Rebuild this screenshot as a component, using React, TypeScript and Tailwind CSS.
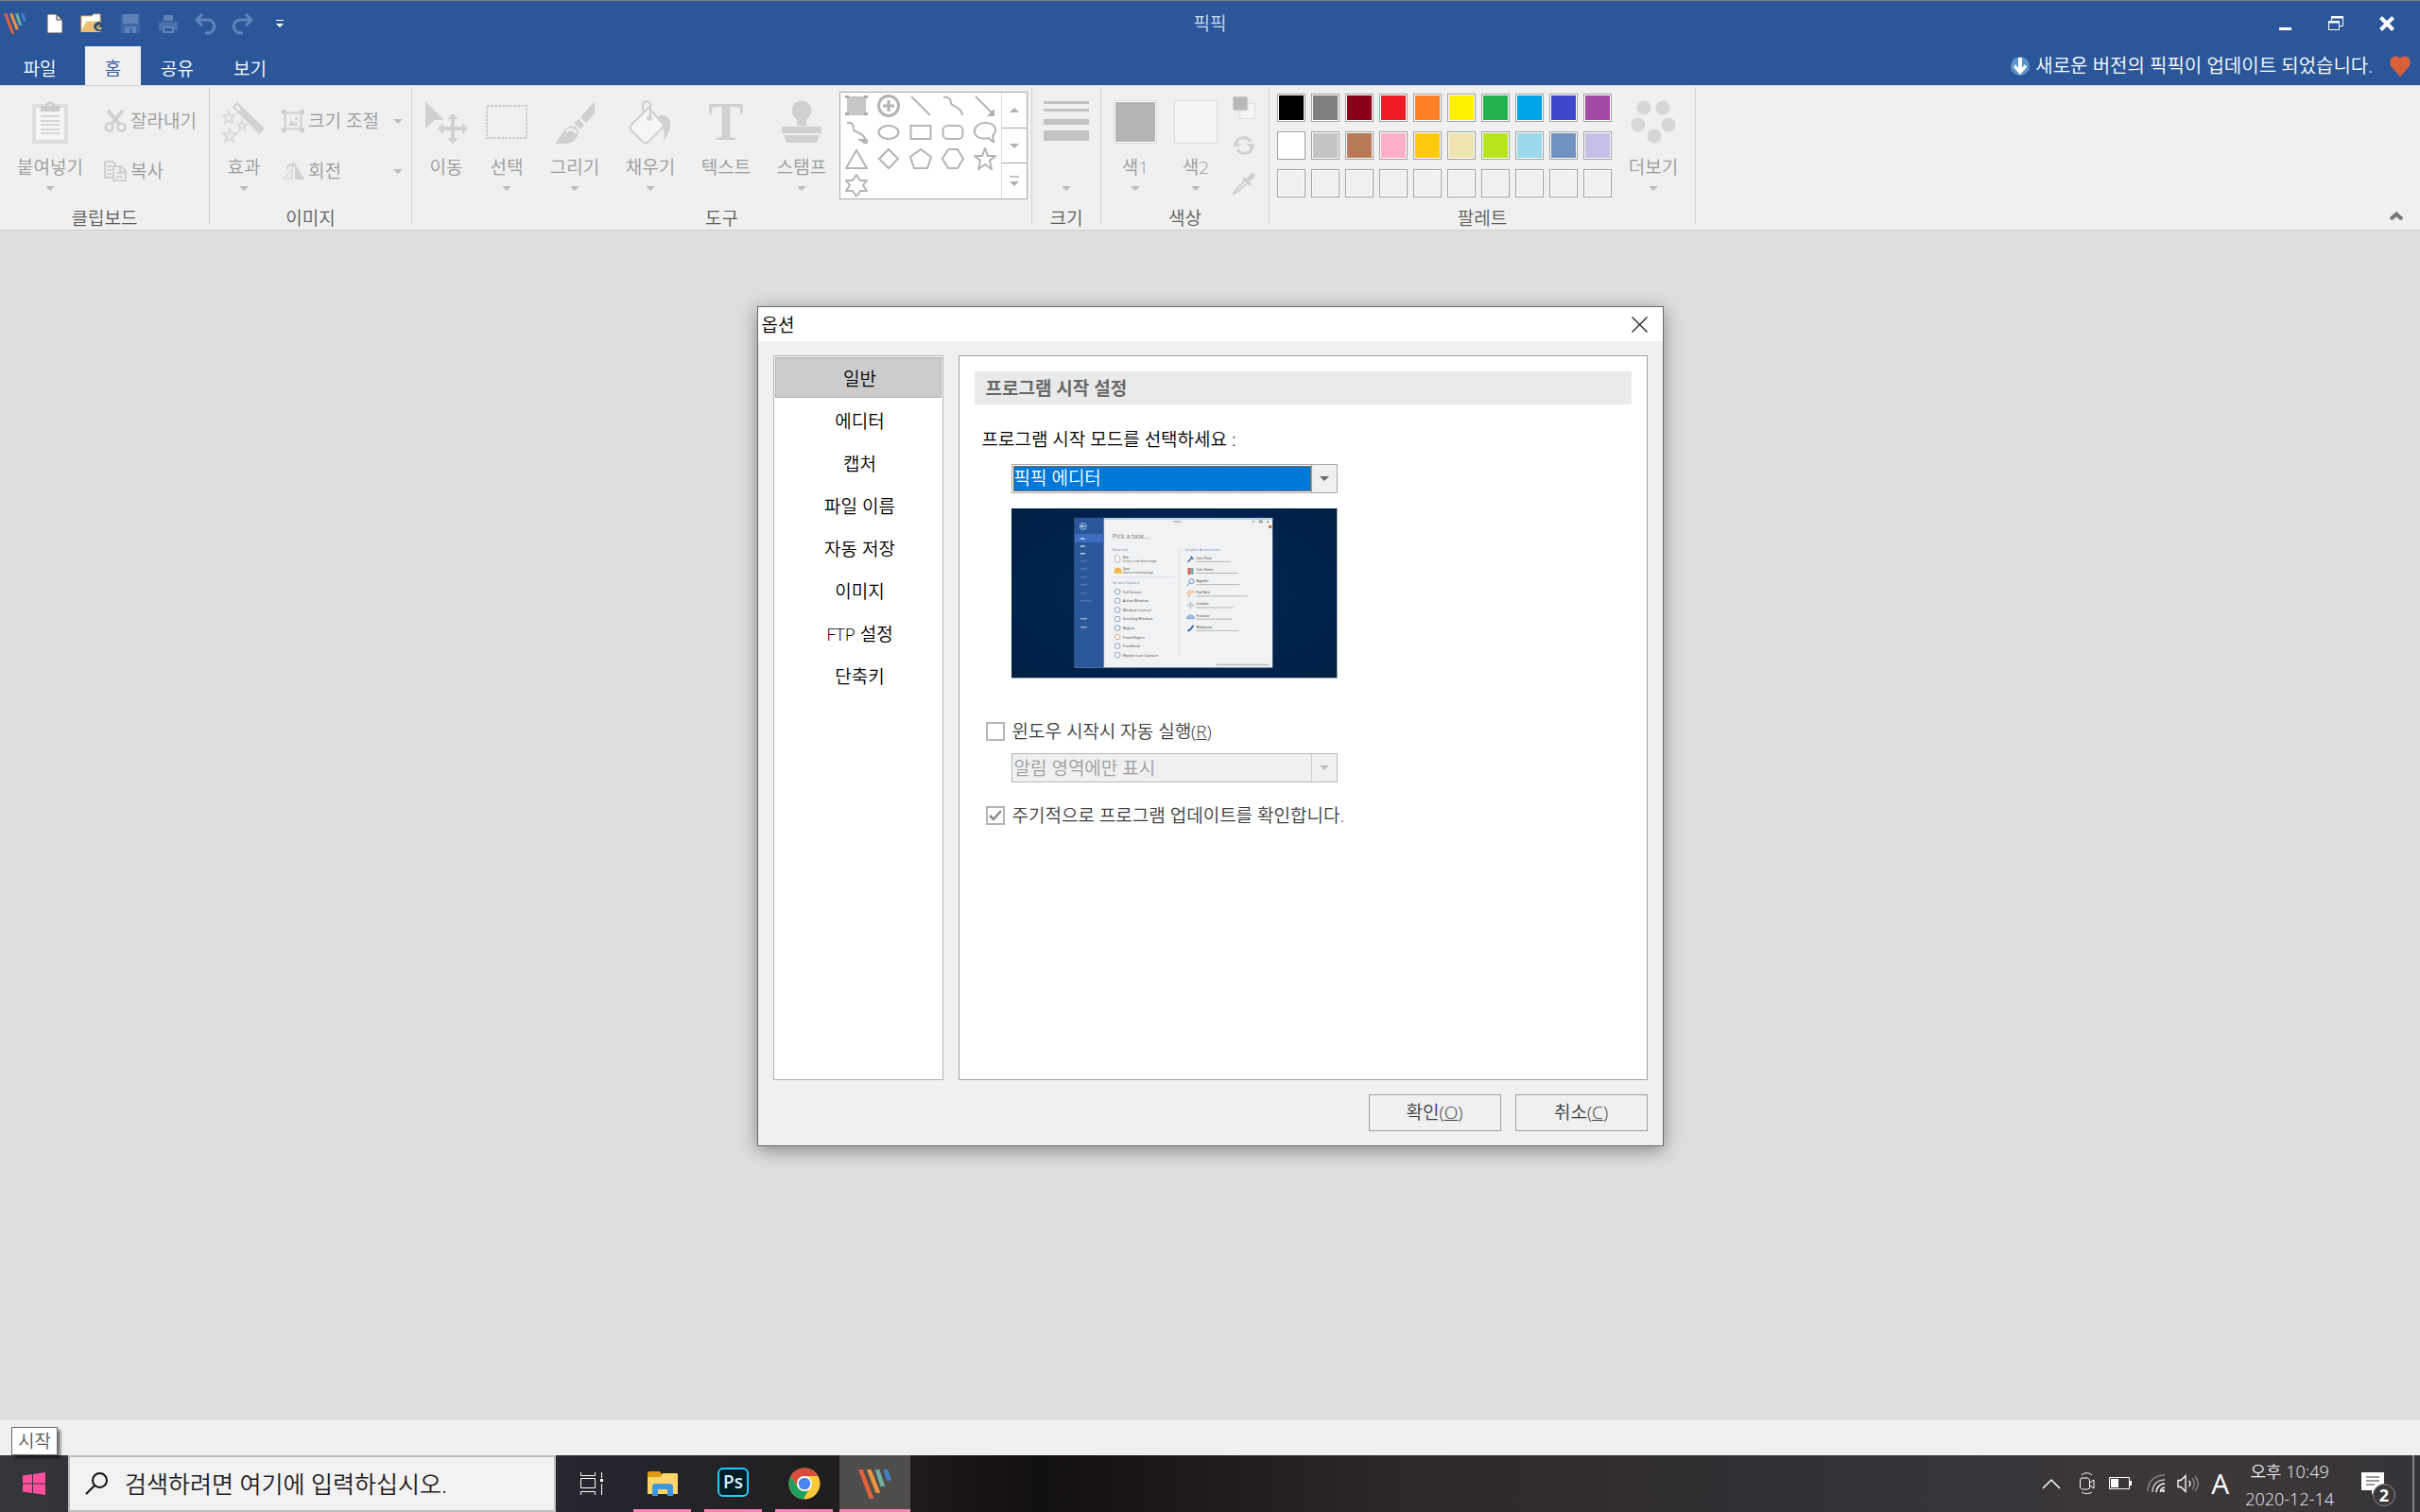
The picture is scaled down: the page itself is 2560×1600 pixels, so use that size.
import { useState } from 'react';
import type { ReactNode } from 'react';

const MENU = ['일반', '에디터', '캡처', '파일 이름', '자동 저장', '이미지', 'FTP 설정', '단축키'];

const PALETTE = [
  '#000000', '#7f7f7f', '#880015', '#ed1c24', '#ff7f27', '#fff200', '#22b14c', '#00a2e8', '#3f48cc', '#a349a4',
  '#ffffff', '#c3c3c3', '#b97a57', '#ffaec9', '#ffc90e', '#efe4b0', '#b5e61d', '#99d9ea', '#7092be', '#c8bfe7',
  '#f0f0f0', '#f0f0f0', '#f0f0f0', '#f0f0f0', '#f0f0f0', '#f0f0f0', '#f0f0f0', '#f0f0f0', '#f0f0f0', '#f0f0f0',
];

function Arrow({ className = 'text-[#bdbdbd]' }: { className?: string }) {
  return (
    <svg width="10" height="5" viewBox="0 0 10 5" className={className}>
      <path d="M0 0h10L5 5z" fill="currentColor" />
    </svg>
  );
}

function Logo({ size, className }: { size: number; className?: string }) {
  return (
    <svg width={size} height={size} viewBox="0 0 36 34" className={className}>
      <path d="M0 1h5l12 32h-5z" fill="#e2603c" />
      <path d="M9 1h5l10 25.500h-5z" fill="#ee9440" />
      <path d="M18 1h5l6 18.500h-5z" fill="#6fac9a" />
      <path d="M27 1h5l4 12h-5z" fill="#3f7fd0" />
    </svg>
  );
}

interface BigButtonProps {
  label: string;
  icon: ReactNode;
  width: string;
  arrow?: boolean;
}

function BigButton({ label, icon, width, arrow = true }: BigButtonProps) {
  return (
    <button className={`flex flex-col items-center pt-[14px] text-[#9a9a9a] ${width}`}>
      <span className="flex h-12 items-center justify-center text-[#d0d0d0]">{icon}</span>
      <span className="mt-3 h-6 leading-6 whitespace-nowrap">{label}</span>
      {arrow && <Arrow className="mt-2 text-[#bdbdbd]" />}
    </button>
  );
}

function SmallButton({ label, icon, arrow }: { label: string; icon: ReactNode; arrow?: boolean }) {
  return (
    <button className="flex h-6 items-center gap-1 whitespace-nowrap text-[#9a9a9a]">
      <span className="text-[#d0d0d0]">{icon}</span>
      {label}
      {arrow && <Arrow className="ml-auto text-[#bdbdbd]" />}
    </button>
  );
}

function Group({ title, width, children }: { title: string; width: string; children: ReactNode }) {
  return (
    <>
      <section className={`flex shrink-0 flex-col ${width}`}>
        <div className="flex flex-1">{children}</div>
        <h2 className="text-center leading-6 text-[#5c5c5c]">{title}</h2>
      </section>
      <div className="mt-px mb-1.5 w-px bg-[#d2d2d2]" />
    </>
  );
}

function TitleBar() {
  return (
    <div className="grid h-12 grid-cols-[1fr_auto_1fr] items-center">
      <div className="flex items-center">
        <Logo size={24} className="mr-[10px] ml-1" />
        <button aria-label="새로 만들기" className="flex w-10 justify-center">
          <svg width="18" height="22" viewBox="0 0 18 22">
            <path d="M1 1h10l6 6v14H1z" fill="#fff" stroke="#555" strokeWidth="1" />
            <path d="M11 1v6h6z" fill="#ddd" stroke="#444" />
          </svg>
        </button>
        <button aria-label="열기" className="flex w-10 justify-center">
          <svg width="26" height="22" viewBox="0 0 26 22">
            <path d="M1 3h11l2-2h7v8H7L1 20z" fill="#fff" stroke="#e9b867" />
            <path d="M1 20L6 9h19l-4 11z" fill="#edbf72" />
            <path d="M14 13c2-4 6-5 9-3v-2l3 0v7h-7l2-2c-2-1-3 0-4 2 1 2 4 3 7 2-3 4-10 2-10-4z" fill="#27527f" />
          </svg>
        </button>
        <button aria-label="저장" className="flex w-10 justify-center">
          <svg width="20" height="22" viewBox="0 0 20 22" fill="#5f82b6">
            <path d="M0 1h20v20H0z" fill="#3d66a5" />
            <path d="M2 1h16v10H2zM4 14h12v7H4z" />
            <path d="M9 16h3v5H9z" fill="#3d66a5" />
          </svg>
        </button>
        <button aria-label="인쇄" className="flex w-10 justify-center">
          <svg width="20" height="20" viewBox="0 0 20 20">
            <path d="M5 1h10v6H5z" fill="#5f82b6" />
            <path d="M0 8h20v9h-4v-4H4v4H0z" fill="#4770ac" />
            <path d="M5 14h10v5H5z" fill="none" stroke="#5f82b6" strokeWidth="2" />
          </svg>
        </button>
        <button aria-label="실행 취소" className="flex w-[39px] justify-center">
          <svg width="23" height="23" viewBox="0 0 23 23" fill="none" stroke="#6184b9" strokeWidth="3">
            <path d="M8 1L2 7l6 6M2 7h12c9 1 9 13 0 14h-3" />
          </svg>
        </button>
        <button aria-label="다시 실행" className="flex w-[39px] justify-center">
          <svg width="23" height="23" viewBox="0 0 23 23" fill="none" stroke="#6184b9" strokeWidth="3">
            <path d="M15 1l6 6-6 6M21 7H9c-9 1-9 13 0 14h3" />
          </svg>
        </button>
        <button aria-label="도구 모음 사용자 지정" className="flex w-[39px] justify-center">
          <svg width="8" height="8" viewBox="0 0 8 8" fill="#fff">
            <path d="M0 0h8v1H0zM0 4h8L4 8z" />
          </svg>
        </button>
      </div>
      <h1 className="pt-px text-[#cfdcee]">픽픽</h1>
      <div className="flex justify-end pr-2">
        <button aria-label="최소화" className="flex w-[54px] items-end justify-center pb-px">
          <span className="h-[3px] w-[13px] bg-white" />
        </button>
        <button aria-label="이전 크기로 복원" className="flex w-[54px] justify-center">
          <svg width="16" height="16" viewBox="0 0 16 16" fill="none" stroke="#fff">
            <path d="M.5 5.500h11v9H.500zM3.500 5V.500h12v10H12" />
            <path d="M0 6.500h12M3 1.500h13" strokeWidth="2" />
          </svg>
        </button>
        <button aria-label="닫기" className="flex w-[54px] justify-center">
          <svg width="16" height="16" viewBox="0 0 16 16" stroke="#fff" strokeWidth="4">
            <path d="M1.500 1.500l13 13M14.500 1.500l-13 13" />
          </svg>
        </button>
      </div>
    </div>
  );
}

function TabBar() {
  return (
    <div className="flex h-[41px] text-white">
      <button className="w-[90px] pt-2 pr-1.5">파일</button>
      <button className="w-[59px] bg-[#f0f0f0] pt-2 text-[#2b579a]">홈</button>
      <button className="w-[77px] pt-2">공유</button>
      <button className="w-[77px] pt-2">보기</button>
      <div className="ml-auto flex items-center gap-1.5 pr-2.5">
        <svg width="20" height="20" viewBox="0 0 20 20">
          <circle cx="10" cy="10" r="10" fill="#5c93c9" />
          <path d="M8 1h4v11l3-4 2 3-7 8-7-8 2-3 3 4z" fill="#fff" />
        </svg>
        <a href="#update" className="text-[20px]">새로운 버전의 픽픽이 업데이트 되었습니다.</a>
        <svg width="22" height="22" viewBox="0 0 22 22" className="ml-3">
          <path d="M11 22L2 12C-1 8 0 1 6 .500c2 0 4 1 5 2.500 1-1.500 3-2.500 5-2.500 6 .500 7 7.500 4 11.500z" fill="#d9603b" />
        </svg>
      </div>
    </div>
  );
}

const SHAPES: { name: string; d: ReactNode }[] = [
  { name: '채운 사각형', d: <><path d="M2 2h20v20H2z" fill="#c6c6c6" stroke="none" /><path d="M0 1h4v3H0zM20 1h4v3h-4zM0 19h4v3H0zM20 19h4v3h-4z" fill="#aaa" stroke="none" /></> },
  { name: '번호', d: <><circle cx="12" cy="12" r="10.500" strokeWidth="3" /><path d="M12 6v12M6 12h12" strokeWidth="3" /></> },
  { name: '직선', d: <path d="M2 2l20 20" /> },
  { name: '곡선', d: <path d="M2 3c6-1 8 2 8 6s11 3 12 13" /> },
  { name: '화살표', d: <><path d="M2 2l18 18" /><path d="M22 15v8h-8z" fill="#b0b0b0" stroke="none" /></> },
  { name: '곡선 화살표', d: <><path d="M2 2c6-1 7 3 7 7s10 1 13 12" /><path d="M16 20h8l-2 4z" fill="#b0b0b0" /></> },
  { name: '타원', d: <ellipse cx="12" cy="12" rx="10.500" ry="7" /> },
  { name: '사각형', d: <rect x="1.500" y="5" width="21" height="14" /> },
  { name: '둥근 사각형', d: <rect x="1.500" y="5" width="21" height="14" rx="5" /> },
  { name: '말풍선', d: <path d="M16 18c-8 2-16-1-15-8C2 0 22-1 23 9c0 4-2 6-3 7l1 6c-2-1-4-2-5-4z" /> },
  { name: '삼각형', d: <path d="M12 3l11 19H1z" /> },
  { name: '마름모', d: <path d="M12 2l10 10-10 10L2 12z" /> },
  { name: '오각형', d: <path d="M12 2l11 8-4 12H5L1 10z" /> },
  { name: '육각형', d: <path d="M7 2h10l6 10-6 10H7L1 12z" /> },
  { name: '별', d: <path d="M12 1l3 8h8l-6 5 2 9-7-5-7 5 2-9-6-5h8z" /> },
  { name: '육각별', d: <path d="M12 1l4 6h7l-4 5 4 6h-7l-4 6-4-6H1l4-6-4-5h7z" /> },
];

function ShapeGallery() {
  return (
    <div className="mt-1.5 flex h-[114px] w-[199px] border border-[#a8a8a8] bg-white">
      <div className="grid flex-1 grid-cols-5 grid-rows-4 place-items-center">
        {SHAPES.map(shape => (
          <button key={shape.name} aria-label={shape.name}>
            <svg width="24" height="24" viewBox="0 0 24 24" fill="none" stroke="#b4b4b4" strokeWidth="2">
              {shape.d}
            </svg>
          </button>
        ))}
      </div>
      <div className="flex w-[27px] flex-col divide-y divide-[#a8a8a8] border-l border-[#dcdcdc]">
        <button aria-label="위로" className="flex flex-1 items-center justify-center">
          <Arrow className="rotate-180 text-[#b0b0b0]" />
        </button>
        <button aria-label="아래로" className="flex flex-1 items-center justify-center">
          <Arrow className="text-[#b0b0b0]" />
        </button>
        <button aria-label="모두 보기" className="flex flex-1 flex-col items-center justify-center gap-1">
          <span className="h-0.5 w-2.5 bg-[#c4c4c4]" />
          <Arrow className="text-[#b0b0b0]" />
        </button>
      </div>
    </div>
  );
}

function Ribbon() {
  return (
    <div className="relative flex h-[154px] border-t border-b border-t-[#d6d6d6] border-b-[#cfcfcf] bg-[#f0f0f0]">
      <Group title="클립보드" width="w-[221px]">
        <BigButton
          label="붙여넣기"
          width="w-[106px]"
          icon={
            <svg width="38" height="46" viewBox="0 0 38 46">
              <path d="M2 6h34v38H2z" fill="none" stroke="#dedede" strokeWidth="4" />
              <path d="M5 9h28v32H5z" fill="#f6f6f6" />
              <path d="M9 12V6h5c0-6 10-6 10 0h5v6z" fill="#cacaca" />
              <circle cx="19" cy="5" r="1.500" fill="#f0f0f0" />
              <path d="M9 17h20M9 22h20M9 26h20M9 31h20M9 35h20" stroke="#d6d6d6" strokeWidth="2" />
            </svg>
          }
        />
        <div className="ml-1 flex flex-col gap-[29px] pt-[25px]">
          <SmallButton
            label="잘라내기"
            icon={
              <svg width="24" height="24" viewBox="0 0 24 24" fill="none" stroke="currentColor">
                <path d="M4 1l12 14M20 1L8 15" strokeWidth="4" />
                <circle cx="5.500" cy="18.500" r="4" strokeWidth="2.500" />
                <circle cx="18.500" cy="18.500" r="4" strokeWidth="2.500" />
              </svg>
            }
          />
          <SmallButton
            label="복사"
            icon={
              <svg width="24" height="24" viewBox="0 0 24 24" fill="none" stroke="currentColor" strokeWidth="2">
                <path d="M1 2h8l4 4M1 2v17h8" />
                <path d="M10 7h8l5 5v10H10zM17 7v6h6M3 7h5M3 11h5M3 15h5M13 14h7M13 18h7" />
              </svg>
            }
          />
        </div>
      </Group>

      <Group title="이미지" width="w-[213px]">
        <BigButton
          label="효과"
          width="w-[72px]"
          icon={
            <svg width="48" height="46" viewBox="0 0 48 46">
              <path d="M17 2l29 28-6 6L12 7z" fill="#d2d2d2" />
              <path d="M17 4l5 5-4 4-5-6z" fill="#f3f3f3" stroke="#d2d2d2" strokeWidth="2" />
              <g fill="#ececec" stroke="#dadada" strokeWidth="2">
                <path d="M8 12l2 4h4l-3 4 1 4-4-2-4 2 1-4-3-4h4z" />
                <path d="M22 22l1 3 4 1-3 2 1 4-3-2-3 2 1-4-3-2 4-1z" />
                <path d="M9 30l2 5h5l-4 4 1 5-4-3-5 3 2-5-4-4h5z" />
              </g>
            </svg>
          }
        />
        <div className="ml-1 flex w-[128px] flex-col gap-[29px] pt-[25px]">
          <SmallButton
            label="크기 조절"
            arrow
            icon={
              <svg width="24" height="24" viewBox="0 0 24 24" fill="currentColor">
                <path d="M0 0h5v5H0zM19 0h5v5h-5zM0 19h5v5H0zM19 19h5v5h-5zM7 17l3-6 3 4 2-2 2 4zM14 8h3v3h-3z" />
                <path d="M3.500 3.500h17v17h-17z" fill="none" stroke="currentColor" strokeWidth="2" />
              </svg>
            }
          />
          <SmallButton
            label="회전"
            arrow
            icon={
              <svg width="24" height="24" viewBox="0 0 24 24" fill="currentColor">
                <path d="M14 4l10 17H14z" />
                <path d="M11 10v10H2z" fill="none" stroke="#dcdcdc" strokeWidth="2" />
                <path d="M5 10c0-5 3-6 6-6V1l4 4-4 4V6C9 6 7 7 7 10z" />
              </svg>
            }
          />
        </div>
      </Group>

      <Group title="도구" width="w-[655px]">
        <BigButton
          label="이동"
          width="ml-1 w-16"
          arrow={false}
          icon={
            <svg width="46" height="46" viewBox="0 0 46 46" fill="currentColor">
              <path d="M1 1l20 20H11L1 30z" />
              <path d="M30 14l6 6h-4v8h8v-4l6 6-6 6v-4h-8v8h4l-6 6-6-6h4v-8h-8v4l-6-6 6-6v4h8v-8h-4z" />
            </svg>
          }
        />
        <BigButton
          label="선택"
          width="w-16"
          icon={
            <svg width="44" height="36" viewBox="0 0 44 36">
              <path d="M1 1h42v34H1z" fill="none" stroke="currentColor" strokeWidth="2" strokeDasharray="3 1" />
            </svg>
          }
        />
        <BigButton
          label="그리기"
          width="w-20"
          icon={
            <svg width="44" height="46" viewBox="0 0 44 46" fill="currentColor">
              <path d="M43 1v13L34 24l-6-6zM26 20l6 6-4 5-7-7z" />
              <path d="M1 46l10-14c4-6 10-6 13-2s2 9-3 13c-5 4-12 3-20 3z" />
              <path d="M13 34c3-5 9-3 10 1" fill="none" stroke="#f0f0f0" strokeWidth="3" />
            </svg>
          }
        />
        <BigButton
          label="채우기"
          width="w-20"
          icon={
            <svg width="46" height="46" viewBox="0 0 46 46">
              <path d="M31 17c10-4 15 5 13 12-1 5-4 9-7 14 1-10 0-16-6-26z" fill="currentColor" />
              <path d="M21 8L3 26c-2 2-2 4 0 6l12 12c2 2 4 2 6 0l17-17z" fill="#f6f6f6" stroke="currentColor" strokeWidth="2" />
              <path d="M15 16V5c0-5 8-5 8 0v13" fill="none" stroke="currentColor" strokeWidth="2" />
              <circle cx="22" cy="19" r="3" fill="currentColor" />
            </svg>
          }
        />
        <BigButton
          label="텍스트"
          width="w-20"
          arrow={false}
          icon={<span className="font-[Liberation_Serif] text-[56px] leading-[48px] font-bold">T</span>}
        />
        <BigButton
          label="스탬프"
          width="w-20"
          icon={
            <svg width="44" height="46" viewBox="0 0 44 46" fill="currentColor">
              <circle cx="22" cy="11" r="10.500" />
              <path d="M17 18h10v9H17zM1 28h42v7H1zM3 37h38l-3 8H6z" />
            </svg>
          }
        />
        <ShapeGallery />
      </Group>

      <Group title="크기" width="w-[72px]">
        <button aria-label="선 굵기" className="flex w-[72px] flex-col items-center pt-4">
          <span className="h-[3px] w-12 bg-[#c2c2c2]" />
          <span className="mt-[5px] h-[3px] w-12 bg-[#c2c2c2]" />
          <span className="mt-2 h-1.5 w-12 bg-[#c2c2c2]" />
          <span className="mt-1.5 h-[11px] w-12 bg-[#c2c2c2]" />
          <Arrow className="mt-12 text-[#bdbdbd]" />
        </button>
      </Group>

      <Group title="색상" width="w-[177px]">
        <BigButton
          label="색1"
          width="ml-1 w-16"
          icon={<span className="size-[46px] border border-[#dadada] bg-[#b4b4b4] ring-1 ring-white ring-inset" />}
        />
        <BigButton label="색2" width="w-16" icon={<span className="size-[46px] border border-[#dcdcdc] bg-[#f5f5f5]" />} />
        <div className="flex w-[38px] flex-col items-center gap-4 pt-[11px] text-[#d0d0d0]">
          <button aria-label="기본 색">
            <svg width="24" height="24" viewBox="0 0 24 24">
              <path d="M7.500 7.500h16v16h-16z" fill="#f5f5f5" stroke="#dcdcdc" />
              <path d="M0 0h16v15H0z" fill="#b8b8b8" stroke="#e4e4e4" />
            </svg>
          </button>
          <button aria-label="색 바꾸기">
            <svg width="24" height="24" viewBox="0 0 24 24" fill="currentColor">
              <path d="M3 11c1-8 12-10 16-3M21 13c-1 8-12 10-16 3" fill="none" stroke="currentColor" strokeWidth="3" />
              <path d="M15 10h9l-4 6zM0 13h9L4 8z" />
            </svg>
          </button>
          <button aria-label="색 추출">
            <svg width="24" height="24" viewBox="0 0 24 24" fill="currentColor">
              <path d="M12 5l3 2 4-5c3-3 6 1 4 4l-5 4 2 3-2 2-8-8z" />
              <path d="M13 9L3 19l-2 4 4-2 11-10" fill="none" stroke="currentColor" strokeWidth="2" />
            </svg>
          </button>
        </div>
      </Group>

      <Group title="팔레트" width="w-[450px]">
        <div className="ml-2 grid grid-cols-[repeat(10,30px)] grid-rows-[repeat(3,30px)] gap-x-1.5 gap-y-2.5 pt-2">
          {PALETTE.map((color, i) => (
            <button key={i} aria-label={`팔레트 ${i + 1}`} className="border border-[#a0a0a0] bg-white p-px">
              <span className="block size-full" style={{ backgroundColor: color }} />
            </button>
          ))}
        </div>
        <BigButton
          label="더보기"
          width="w-[88px]"
          icon={
            <svg width="48" height="46" viewBox="0 0 48 46" fill="#d6d6d6">
              <circle cx="14" cy="8" r="7.500" />
              <circle cx="34" cy="8" r="7.500" />
              <circle cx="8" cy="26" r="7.500" />
              <circle cx="40" cy="26" r="7.500" />
              <circle cx="25" cy="38" r="7.500" />
            </svg>
          }
        />
      </Group>

      <button aria-label="리본 메뉴 축소" className="mr-[18px] mb-2.5 ml-auto self-end">
        <svg width="14" height="9" viewBox="0 0 14 9" fill="none" stroke="#757575" strokeWidth="4">
          <path d="M1 8l6-5.500L13 8" />
        </svg>
      </button>
    </div>
  );
}

const CAPTURES = ['Full Screen', 'Active Window', 'Window Control', 'Scrolling Window', 'Region', 'Fixed Region', 'FreeHand', 'Repeat Last Capture'];
const TOOLS = ['Color Picker', 'Color Palette', 'Magnifier', 'Pixel Ruler', 'Crosshair', 'Protractor', 'Whiteboard'];
const SIDE_LINES = [56, 64, 73, 81, 90, 98, 117, 126];

// one 8x8 icon for each entry of TOOLS
const TOOL_ICONS: ReactNode[] = [
  <path d="M1 7l4-4M4 1l3 3" stroke="#3a6ea5" strokeWidth="1.500" />,
  <><path d="M1 1h3v7H1z" fill="#d9603b" /><path d="M4 1h3v7H4z" fill="#7aa7b5" /></>,
  <><circle cx="5" cy="3" r="2.500" stroke="#5c8fcc" fill="none" /><path d="M3 5L0 8" stroke="#5c8fcc" /></>,
  <path d="M1 7V1h7v2H3v4z" fill="#fbd9b8" stroke="#f0a060" strokeWidth=".5" />,
  <path d="M4 0v8M0 4h8M4 1.500a2.500 2.500 0 1 0 .1 0" stroke="#a9b4bf" strokeWidth=".7" fill="none" />,
  <path d="M0 6c0-5 8-5 8 0z" fill="#9cc0e4" stroke="#5c93c9" strokeWidth=".7" />,
  <path d="M1 7l3-2 3-4" stroke="#2b6cb0" strokeWidth="2" fill="none" />,
];

function StartPreview() {
  return (
    <svg viewBox="0 0 345 180" className="block w-[345px] border-r border-b border-[#a8aeb5]" role="img" aria-label="픽픽 에디터">
      <defs>
        <radialGradient id="preview-bg" r="0.7">
          <stop offset="0" stopColor="#002a57" />
          <stop offset="1" stopColor="#001f45" />
        </radialGradient>
      </defs>
      <rect width="345" height="180" fill="url(#preview-bg)" />
      <rect x="67" y="10" width="210" height="159" fill="#f1f2f3" />
      <rect x="97" y="10" width="180" height="2" fill="#b9cfe8" />
      <rect x="67" y="10" width="31" height="159" fill="#2a579a" />
      <rect x="67" y="27" width="31" height="9" fill="#3d6cc0" />
      <circle cx="76" cy="19" r="3.500" fill="none" stroke="#a9c0e2" />
      <path d="M78 19h-4M75.500 17.500L74 19l1.500 1.500" stroke="#fff" fill="none" />
      <g stroke="#fff" strokeWidth="1.500">
        <path d="M73 32h5M73 40h5M73 48h5" opacity=".7" />
        {SIDE_LINES.map((y, i) => (
          <path key={y} d={`M73 ${y}h${i === 5 ? 12 : 7}`} opacity={i > 5 ? 0.5 : 0.18} />
        ))}
      </g>
      <path d="M172 14h8M255 14h3M263 13h3v2h-3zM271 13l2 2M273 13l-2 2" stroke="#888" strokeWidth="1" fill="none" />
      <rect x="273" y="18" width="3" height="3" fill="#e05a2b" />
      <g fontFamily="Open Sans, sans-serif" fontWeight="400">
        <text x="107" y="32" fontSize="7" fill="#7a7a7a">Pick a task...</text>
        <text x="107" y="45" fontSize="4" fill="#5c82c4">New task</text>
        <text x="107" y="80" fontSize="4" fill="#5c82c4">Screen Capture</text>
        <text x="184" y="45" fontSize="4" fill="#5c82c4">Graphic Accessories</text>
        <text x="118" y="53" fontSize="3" fill="#333">New</text>
        <text x="118" y="57" fontSize="3" fill="#555">Create a new blank image</text>
        <text x="118" y="65" fontSize="3" fill="#333">Open</text>
        <text x="118" y="69" fontSize="3" fill="#555">Open an existing image</text>
        {CAPTURES.map((name, i) => (
          <g key={name}>
            <rect x="110" y={86 + i * 9.6} width="5" height="5" rx="1" fill="#fff" stroke={i === 5 ? '#d9a08a' : '#7f9cc4'} />
            <text x="118" y={90 + i * 9.6} fontSize="4" fill="#444">{name}</text>
          </g>
        ))}
        {TOOLS.map((name, i) => (
          <g key={name}>
            <g transform={`translate(186 ${50 + i * 12.2})`}>{TOOL_ICONS[i]}</g>
            <text x="196" y={54 + i * 12.2} fontSize="3" fill="#222">{name}</text>
            <path d={`M196 ${56.5 + i * 12.2}h${[36, 44, 46, 55, 39, 38, 45][i]}`} stroke="#b4b4b4" />
          </g>
        ))}
      </g>
      <path d="M110 50h3l2 2v5h-5z" fill="#fff" stroke="#b5b5b5" />
      <path d="M109 69v-4l2-2h4l2 3v3z" fill="#f0b84a" />
      <path d="M107 73h67M178 41v116" stroke="#dfe2e6" strokeWidth="1" />
      <path d="M217 166h56" stroke="#bcbcbc" strokeWidth="1.500" />
    </svg>
  );
}

function Checkbox({ id, checked, onChange, children }: { id: string; checked: boolean; onChange: () => void; children: ReactNode }) {
  return (
    <div className="ml-3 flex h-6 items-center gap-2">
      <span className="relative flex size-5">
        <input id={id} type="checkbox" checked={checked} onChange={onChange} className="size-5 appearance-none border-2 border-[#b4b4b4] bg-white" />
        {checked && (
          <svg width="20" height="20" viewBox="0 0 20 20" className="pointer-events-none absolute inset-0">
            <path d="M4 10l4 4 8-9" fill="none" stroke="#8a8a8a" strokeWidth="2.500" />
          </svg>
        )}
      </span>
      <label htmlFor={id} className="whitespace-nowrap text-[#3c3c3c]">{children}</label>
    </div>
  );
}

function OptionsDialog() {
  const [page, setPage] = useState('일반');
  const [autoRun, setAutoRun] = useState(false);
  const [autoUpdate, setAutoUpdate] = useState(true);

  return (
    <div role="dialog" aria-label="옵션" className="flex h-[889px] w-[959px] flex-col border border-[#6a6a6a] bg-[#f0f0f0] shadow-[0_4px_18px_rgba(0,0,0,0.4)]">
      <div className="flex h-9 items-center justify-between bg-white pr-4 pl-1 text-black">
        <h2 className="pt-0.5">옵션</h2>
        <button aria-label="옵션 닫기">
          <svg width="17" height="17" viewBox="0 0 17 17" stroke="#222" strokeWidth="1.300">
            <path d="M.5 .500l16 16M16.500 .500l-16 16" />
          </svg>
        </button>
      </div>

      <div className="flex flex-1 gap-4 px-4 pt-[15px]">
        <nav className="flex w-[180px] flex-col gap-0.5 border border-[#b4b4b4] bg-white p-px">
          {MENU.map(item => (
            <button
              key={item}
              onClick={() => setPage(item)}
              className={`h-[43px] border pt-1 pl-1 text-black ${page === item ? 'border-[#b0b0b0] bg-[#cccccc]' : 'border-transparent'}`}
            >
              {item}
            </button>
          ))}
        </nav>

        <div className="flex-1 border border-[#a0a0a0] bg-white p-4">
          <h3 className="h-[35px] bg-[#eaeaea] pl-3 leading-9 font-bold text-[#686868]">프로그램 시작 설정</h3>
          <label htmlFor="start-mode" className="mt-[25px] block pl-2 leading-6 text-black">프로그램 시작 모드를 선택하세요 :</label>
          <div className="relative mt-3.5 ml-[39px] flex h-[31px] w-[345px] border border-[#a8a8a8] bg-[#f0f0f0]">
            <select id="start-mode" className="w-full appearance-none bg-transparent pr-7 pl-0.5 text-white [background:linear-gradient(#0078d7,#0078d7)_1px_1px/315px_27px_no-repeat,linear-gradient(#fff,#fff)_0_0/317px_29px_no-repeat]">
              <option>픽픽 에디터</option>
            </select>
            <span className="pointer-events-none absolute top-px left-px h-[27px] w-[315px] border border-dotted border-[#222] outline-1 -outline-offset-1 outline-[#e08a30]/50" />
            <span className="pointer-events-none absolute top-0 right-0 flex h-full w-[27px] items-center justify-center border-l border-[#a8a8a8]">
              <Arrow className="text-[#6a6a6a]" />
            </span>
          </div>
          <div className="mt-4 ml-[39px]">
            <StartPreview />
          </div>

          <div className="mt-11">
            <Checkbox id="auto-run" checked={autoRun} onChange={() => setAutoRun(!autoRun)}>
              윈도우 시작시 자동 실행(<u>R</u>)
            </Checkbox>
          </div>
          <div className="relative mt-[11px] ml-[39px] h-[31px] w-[345px] border border-[#b8b8b8] bg-[#f0f0f0]">
            <select aria-label="자동 실행 표시 방식" disabled className="size-full appearance-none pl-0.5 text-[#9c9c9c] opacity-100">
              <option>알림 영역에만 표시</option>
            </select>
            <span className="pointer-events-none absolute top-0 right-0 flex h-full w-[27px] items-center justify-center border-l border-[#cccccc]">
              <Arrow className="text-[#bcbcbc]" />
            </span>
          </div>
          <div className="mt-[23px]">
            <Checkbox id="auto-update" checked={autoUpdate} onChange={() => setAutoUpdate(!autoUpdate)}>
              주기적으로 프로그램 업데이트를 확인합니다.
            </Checkbox>
          </div>
        </div>
      </div>

      <div className="flex justify-end gap-[15px] px-4 py-[15px] text-[#3c3c3c]">
        <button className="h-[39px] w-[140px] border border-[#a0a0a0]">확인(<u>O</u>)</button>
        <button className="h-[39px] w-[140px] border border-[#a0a0a0]">취소(<u>C</u>)</button>
      </div>
    </div>
  );
}

function TaskButton({ label, running, active, children }: { label: string; running?: boolean; active?: boolean; children: ReactNode }) {
  return (
    <button
      aria-label={label}
      className={`relative flex w-[75px] items-center justify-center ${active ? 'bg-[#4f4d4b]' : ''}`}
    >
      {children}
      {running && <span className={`absolute bottom-0 h-[3px] bg-[#ff80b4] ${active ? 'inset-x-0' : 'inset-x-[7px]'}`} />}
    </button>
  );
}

function Taskbar() {
  return (
    <div className="flex h-15 bg-[linear-gradient(90deg,#34363c_0%,#24252d_26%,#211d1c_36%,#12100f_43%,#1b1817_48%,#2d2829_58%,#35343a_80%,#3e3738_92%,#343338_100%)] text-white">
      <button aria-label="시작" className="flex w-[72px] items-center justify-center">
        <svg width="24" height="24" viewBox="0 0 24 24" fill="#ff4f9a">
          <path d="M0 3.500l10-1.400V11.500H0zM11 2l13-2v11.500H11zM0 12.500h10V22L0 20.500zM11 12.500h13V24l-13-2z" />
        </svg>
      </button>
      <label className="flex w-[516px] items-center border-2 border-[#bdbdbd] bg-[#f2f2f2] pl-4">
        <svg width="24" height="24" viewBox="0 0 24 24" fill="none" stroke="#111" strokeWidth="2">
          <circle cx="15.500" cy="8.500" r="7.500" />
          <path d="M10 14L1 23" />
        </svg>
        <input
          aria-label="검색"
          placeholder="검색하려면 여기에 입력하십시오."
          className="ml-[18px] flex-1 bg-transparent text-[25px] leading-8 placeholder:text-[#1c1c1c] placeholder:opacity-100"
        />
      </label>
      <TaskButton label="작업 보기">
        <svg width="24" height="24" viewBox="0 0 24 24" fill="none" stroke="#fff">
          <path d="M.5 0v3.500h15V0M.5 6.500h15v10H.500zM.5 24v-3.500h15V24M22.500 0v6M22.500 12v12" />
          <path d="M21 7h3v3h-3z" fill="#fff" stroke="none" />
        </svg>
      </TaskButton>
      <TaskButton label="파일 탐색기" running>
        <svg width="32" height="26" viewBox="0 0 32 26">
          <path d="M0 2c0-1 1-2 2-2h11l2 3-3 5H0z" fill="#e19c12" />
          <path d="M0 6h13l3-4h15l1 1v21H0z" fill="#fdd568" />
          <path d="M5 15l2-2h17l3 2v11h-6v-7H11v7H5z" fill="#3f97dc" />
        </svg>
      </TaskButton>
      <TaskButton label="Photoshop" running>
        <span className="mb-1 flex h-[31px] w-[33px] items-center justify-center rounded-md border-2 border-[#26c9ff] bg-[#001d26] font-[Open_Sans] text-[19px] font-semibold text-[#d8f3ff]">Ps</span>
      </TaskButton>
      <TaskButton label="Chrome" running>
        <svg width="34" height="34" viewBox="0 0 34 34">
          <circle cx="17" cy="17" r="16.500" fill="#fbc93c" />
          <path d="M2.700 8.800A16.500 16.500 0 0 1 31.300 9H17a8 8 0 0 0-7.500 11z" fill="#dc4a3d" />
          <path d="M2.700 8.800L10 21a8 8 0 0 0 11 3l-5 9.500A16.500 16.500 0 0 1 2.700 8.800z" fill="#1fa05c" />
          <circle cx="17" cy="17" r="8" fill="#fff" />
          <circle cx="17" cy="17" r="6.300" fill="#4a86f0" />
        </svg>
      </TaskButton>
      <TaskButton label="픽픽" running active>
        <Logo size={35} />
      </TaskButton>

      <div className="ml-auto flex items-center">
        <button aria-label="숨겨진 아이콘 표시" className="mr-[19px]">
          <svg width="20" height="12" viewBox="0 0 20 12" fill="none" stroke="#fff" strokeWidth="1.500">
            <path d="M1 11l9-9 9 9" />
          </svg>
        </button>
        <svg width="18" height="24" viewBox="0 0 18 24" fill="none" stroke="#fff" className="mr-3.5">
          <path d="M2.500 6h7l2 2v9l-2 1h-6l-2-2V8zM12 11l4-3v9l-4-3M3 3c3-3 8-3 11 0M3 21c3 2 8 2 11 0" />
        </svg>
        <svg width="24" height="14" viewBox="0 0 24 14" className="mr-4">
          <path d="M.5 .500h21v12H.500z" fill="none" stroke="#fff" />
          <path d="M2 2h8v9H2zM22 4h2v5h-2z" fill="#fff" />
        </svg>
        <svg width="20" height="20" viewBox="0 0 20 20" fill="none" stroke="#fff" strokeWidth="1.500" className="mr-3">
          <path d="M1 18C1 8 8 1 19 1" opacity=".4" />
          <path d="M6 19C6 11 11 6 19 6" opacity=".7" />
          <path d="M10 19c0-5 4-9 9-9M14.500 19c0-3 2-5 4.500-5" />
          <circle cx="17.500" cy="17.500" r="1.500" fill="#fff" stroke="none" />
        </svg>
        <svg width="24" height="20" viewBox="0 0 24 20" fill="none" stroke="#fff" strokeWidth="1.300" className="mr-3">
          <path d="M1 6.500h3l5-5v17l-5-5H1zM12.500 7c2 2 2 4 0 6" />
          <path d="M16 4c3 4 3 8 0 12M19 2c4 5 4 11 0 16" opacity=".4" />
        </svg>
        <span className="font-[Open_Sans] text-[30px] leading-none font-normal">A</span>
        <time className="mt-1 ml-[17px] text-center text-[18px] leading-[29px] text-[#f0f0f0]">
          <span className="block">오후 10:49</span>
          <span className="block">2020-12-14</span>
        </time>
        <button aria-label="알림 2개" className="relative mr-[30px] ml-[29px]">
          <svg width="24" height="24" viewBox="0 0 24 24" fill="#fff">
            <path d="M0 0h24v19H14l-3 5v-5H0z" />
            <path d="M5 5h14M5 9h14M5 13h9" stroke="#3a3638" />
          </svg>
          <span className="absolute top-3 left-3 flex size-6 items-center justify-center rounded-full border border-[#8c8a8b] bg-[#3d3839] text-[18px] leading-none font-bold">2</span>
        </button>
      </div>
      <button aria-label="바탕 화면 보기" className="w-2 border-l-2 border-[#858285]" />
    </div>
  );
}

export default function App() {
  return (
    <div className="flex h-screen flex-col overflow-hidden bg-[#dedede] font-['Open_Sans','Noto_Sans_CJK_KR',sans-serif] text-[19px] font-[350]">
      <div className="relative flex flex-1 flex-col">
        <header className="border-t border-[#7f7f7f] bg-[#2b579a]">
          <TitleBar />
          <TabBar />
        </header>
        <Ribbon />
        <main className="flex-1" />
        <footer className="h-[37px] bg-[#f0f0f0]" />

        <div className="absolute inset-0 flex items-center justify-center pb-[3px]">
          <OptionsDialog />
        </div>
        <div role="tooltip" className="absolute bottom-0 left-3 border border-[#6a6a6a] bg-white px-1.5 leading-7 text-[#575757] shadow-[3px_3px_3px_rgba(0,0,0,0.5)]">
          시작
        </div>
      </div>
      <Taskbar />
    </div>
  );
}
